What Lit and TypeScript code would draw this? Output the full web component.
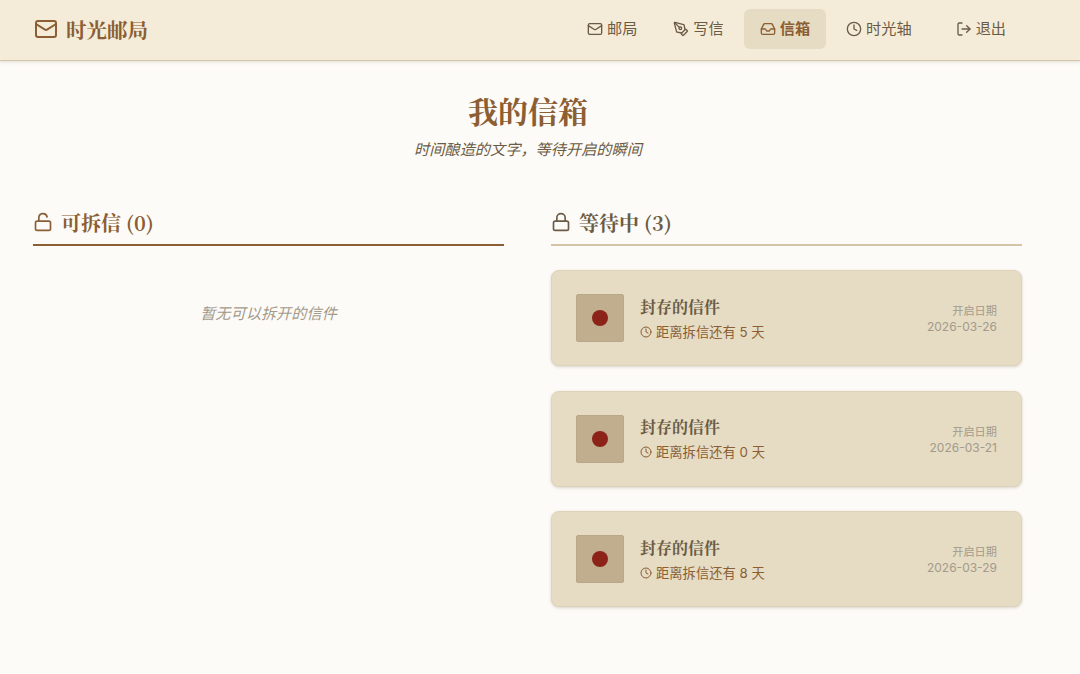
import { LitElement, html, css, svg } from 'lit';
import { customElement } from 'lit/decorators.js';

const icons = {
  mail: svg`<rect x="2" y="4" width="20" height="16" rx="2"></rect><path d="m22 7-8.97 5.7a1.94 1.94 0 0 1-2.06 0L2 7"></path>`,
  pen: svg`<path d="M15.707 21.293a1 1 0 0 1-1.414 0l-1.586-1.586a1 1 0 0 1 0-1.414l5.586-5.586a1 1 0 0 1 1.414 0l1.586 1.586a1 1 0 0 1 0 1.414z"></path><path d="m18 13-1.375-6.874a1 1 0 0 0-.746-.776L3.235 2.028a1 1 0 0 0-1.207 1.207L5.35 15.879a1 1 0 0 0 .776.746L13 18"></path><path d="m2.3 2.3 7.286 7.286"></path><circle cx="11" cy="11" r="2"></circle>`,
  inbox: svg`<polyline points="22 12 16 12 14 15 10 15 8 12 2 12"></polyline><path d="M5.45 5.11 2 12v6a2 2 0 0 0 2 2h16a2 2 0 0 0 2-2v-6l-3.45-6.89A2 2 0 0 0 16.76 4H7.24a2 2 0 0 0-1.79 1.11z"></path>`,
  clock: svg`<circle cx="12" cy="12" r="10"></circle><polyline points="12 6 12 12 16 14"></polyline>`,
  logout: svg`<path d="m16 17 5-5-5-5"></path><path d="M21 12H9"></path><path d="M9 21H5a2 2 0 0 1-2-2V5a2 2 0 0 1 2-2h4"></path>`,
  lock: svg`<rect x="3" y="11" width="18" height="11" rx="2"></rect><path d="M7 11V7a5 5 0 0 1 10 0v4"></path>`,
  unlock: svg`<rect x="3" y="11" width="18" height="11" rx="2"></rect><path d="M7 11V7a5 5 0 0 1 9.9-1"></path>`,
};

const icon = (name: keyof typeof icons, size: number) => html`<svg
  width=${size} height=${size} viewBox="0 0 24 24" fill="none" stroke="currentColor"
  stroke-width="2" stroke-linecap="round" stroke-linejoin="round">${icons[name]}</svg>`;

const navItems: { name: keyof typeof icons; label: string; active?: boolean; logout?: boolean }[] = [
  { name: 'mail', label: '邮局' },
  { name: 'pen', label: '写信' },
  { name: 'inbox', label: '信箱', active: true },
  { name: 'clock', label: '时光轴' },
  { name: 'logout', label: '退出', logout: true },
];

const letters = [
  { days: 5, date: '2026-03-26' },
  { days: 0, date: '2026-03-21' },
  { days: 8, date: '2026-03-29' },
];

@customElement('app-root')
export class AppRoot extends LitElement {
  static styles = css`
    :host {
      display: block;
      min-height: 674px;
      background: #fdfbf7;
      color: #6b5b45;
      font-family: Inter, 'Noto Sans CJK SC', sans-serif;
    }

    header {
      display: flex;
      justify-content: space-between;
      align-items: center;
      height: 58px;
      padding: 0 58px 2px 34px;
      background: #f4ecd8;
      border-bottom: 1px solid #d4c5a9;
      box-shadow: 0 1px 3px rgba(107, 91, 69, 0.2);
    }

    .logo {
      display: flex;
      align-items: center;
      gap: 8px;
      color: #8b5e34;
      font-family: 'Noto Serif CJK SC', 'Liberation Serif', 'Noto Sans CJK SC', serif;
      font-size: 20.5px;
      font-weight: 700;
    }

    nav {
      display: flex;
      align-items: center;
      gap: 4px;
    }

    .nav-item {
      display: flex;
      align-items: center;
      gap: 4px;
      height: 40px;
      padding: 0 16px;
      border-radius: 6px;
      font-size: 15.2px;
      line-height: 20px;
    }

    .nav-item.active {
      background: #e5dcc3;
      color: #8b5e34;
      font-weight: 600;
    }

    .nav-item.logout {
      margin-left: 8px;
    }

    .title {
      padding: 28px 24px 0 0;
      text-align: center;
    }

    h1 {
      margin: 0;
      color: #8b5e34;
      font-family: 'Noto Serif CJK SC', 'Liberation Serif', 'Noto Sans CJK SC', serif;
      font-size: 30px;
      font-weight: 700;
      line-height: 42px;
    }

    .subtitle {
      margin: 7px 0 0;
      font-size: 15.2px;
      font-style: italic;
      line-height: 24px;
    }

    .columns {
      display: grid;
      grid-template-columns: 471px 471px;
      gap: 47px;
      padding: 38px 0 0 33px;
    }

    h2 {
      display: flex;
      align-items: center;
      gap: 8px;
      height: 44px;
      margin: 0;
      border-bottom: 2px solid #d4c5a9;
      font-family: 'Noto Serif CJK SC', 'Liberation Serif', 'Noto Sans CJK SC', serif;
      font-size: 20px;
      font-weight: 700;
    }

    .open h2 {
      color: #8b5e34;
      border-bottom-color: #8b5e34;
    }

    .empty {
      margin: 56px 0 0;
      color: #a39a8c;
      font-size: 15.2px;
      font-style: italic;
      line-height: 24px;
      text-align: center;
    }

    .list {
      display: flex;
      flex-direction: column;
      gap: 24.5px;
      margin-top: 24px;
    }

    .card {
      display: flex;
      align-items: center;
      gap: 16px;
      height: 96px;
      padding: 0 24px;
      box-sizing: border-box;
      background: #e5dcc3;
      border: 1px solid #dfd3bb;
      border-radius: 8px;
      box-shadow: 0 1px 3px rgba(107, 91, 69, 0.25);
    }

    .stamp {
      display: flex;
      justify-content: center;
      align-items: center;
      width: 48px;
      height: 48px;
      flex: none;
      background: #c0ae8f;
      border: 1px solid #b8a88a;
      border-radius: 2px;
      box-sizing: border-box;
    }

    .seal {
      width: 16px;
      height: 16px;
      border-radius: 50%;
      background: #8b2318;
    }

    .info {
      flex: 1;
    }

    .name {
      font-family: 'Noto Serif CJK SC', 'Liberation Serif', 'Noto Sans CJK SC', serif;
      font-size: 16px;
      font-weight: 700;
      line-height: 24px;
    }

    .remain {
      display: flex;
      align-items: center;
      gap: 4px;
      margin-top: 3px;
      color: #8b5e34;
      font-size: 13.3px;
      line-height: 20px;
    }

    .date {
      padding-top: 2px;
      color: #a39a8c;
      font-size: 12px;
      line-height: 16px;
      text-align: right;
    }

    .date-label {
      font-size: 11.2px;
    }
  `;

  render() {
    return html`
      <header>
        <div class="logo">${icon('mail', 24)}<span>时光邮局</span></div>
        <nav>
          ${navItems.map(
            (item) => html`<div class="nav-item ${item.active ? 'active' : ''} ${item.logout ? 'logout' : ''}">
              ${icon(item.name, 16)}<span>${item.label}</span>
            </div>`,
          )}
        </nav>
      </header>
      <div class="title">
        <h1>我的信箱</h1>
        <p class="subtitle">时间酿造的文字，等待开启的瞬间</p>
      </div>
      <div class="columns">
        <section class="open">
          <h2>${icon('unlock', 20)}<span>可拆信 (0)</span></h2>
          <p class="empty">暂无可以拆开的信件</p>
        </section>
        <section>
          <h2>${icon('lock', 20)}<span>等待中 (3)</span></h2>
          <div class="list">
            ${letters.map(
              (l) => html`<div class="card">
                <div class="stamp"><div class="seal"></div></div>
                <div class="info">
                  <div class="name">封存的信件</div>
                  <div class="remain">${icon('clock', 12)}<span>距离拆信还有 ${l.days} 天</span></div>
                </div>
                <div class="date">
                  <div class="date-label">开启日期</div>
                  <div>${l.date}</div>
                </div>
              </div>`,
            )}
          </div>
        </section>
      </div>
    `;
  }
}
